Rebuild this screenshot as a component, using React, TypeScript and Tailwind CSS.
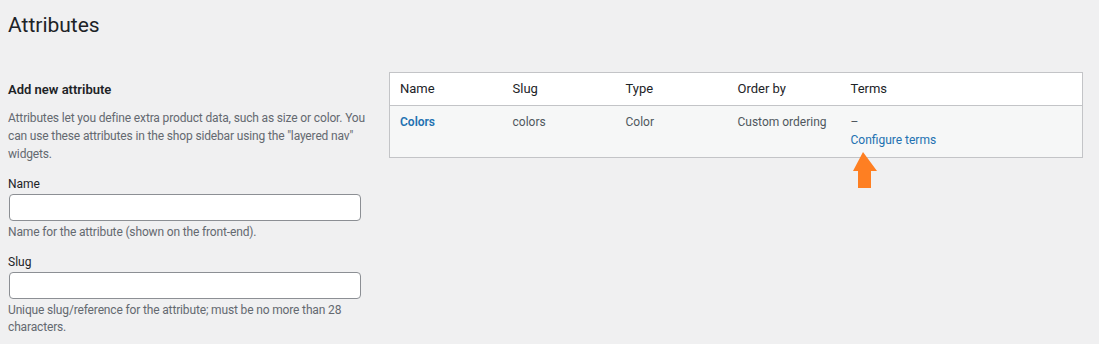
const App = () => {
  return (
    <div
      className="min-h-screen w-[1099px] h-[344px] overflow-hidden bg-[#f0f0f1] text-[#1d2327]"
      style={{ fontFamily: 'Roboto, "Liberation Sans", Arial, sans-serif' }}
    >
      <div className="pl-[8px] pt-[11px]">
        <h1 className="text-[21px] leading-[29px] font-normal text-[#1d2327]">Attributes</h1>

        <div className="flex mt-[32px]">
          {/* left column: add form */}
          <div className="w-[375px] shrink-0 pt-[8px]">
            <h2 className="text-[13px] leading-[20px] font-semibold">Add new attribute</h2>
            <p className="mt-[9px] text-[12px] leading-[18px] tracking-[-0.15px] whitespace-nowrap text-[#646970]">
              Attributes let you define extra product data, such as size or color. You
              <br />
              can use these attributes in the shop sidebar using the "layered nav"
              <br />
              widgets.
            </p>

            <div className="mt-[12px]">
              <label className="block text-[12px] leading-[18px]">Name</label>
              <input
                type="text"
                className="mt-[1px] ml-[1px] block w-[352px] h-[27px] bg-white border border-[#8c8f94] rounded-[4px]"
              />
              <p className="mt-[2px] text-[12px] leading-[18px] tracking-[-0.15px] text-[#646970]">
                Name for the attribute (shown on the front-end).
              </p>
            </div>

            <div className="mt-[12px]">
              <label className="block text-[12px] leading-[18px]">Slug</label>
              <input
                type="text"
                className="mt-[1px] ml-[1px] block w-[352px] h-[27px] bg-white border border-[#8c8f94] rounded-[4px]"
              />
              <p className="mt-[3px] text-[12px] leading-[17px] tracking-[-0.15px] whitespace-nowrap text-[#646970]">
                Unique slug/reference for the attribute; must be no more than 28
                <br />
                characters.
              </p>
            </div>
          </div>

          {/* right column: table */}
          <div className="ml-[6px]">
            <table className="w-[694px] border border-[#c3c4c7] border-collapse table-fixed">
              <thead>
                <tr className="bg-white border-b border-[#c3c4c7] text-[13px]">
                  <th className="w-[113px] h-[33px] pl-[10px] text-left font-normal">Name</th>
                  <th className="w-[113px] pl-[10px] text-left font-normal">Slug</th>
                  <th className="w-[112px] pl-[10px] text-left font-normal">Type</th>
                  <th className="w-[113px] pl-[10px] text-left font-normal">Order by</th>
                  <th className="pl-[10px] text-left font-normal">Terms</th>
                </tr>
              </thead>
              <tbody>
                <tr className="bg-[#f6f7f7] align-top text-[12px] leading-[18px] text-[#50575e]">
                  <td className="pl-[10px] pt-[7px] h-[52px]">
                    <a className="text-[#2271b1] font-semibold">Colors</a>
                  </td>
                  <td className="pl-[10px] pt-[7px]">colors</td>
                  <td className="pl-[10px] pt-[7px]">Color</td>
                  <td className="pl-[10px] pt-[7px]">Custom ordering</td>
                  <td className="pl-[10px] pt-[7px]">
                    <div>–</div>
                    <a className="text-[#2271b1]">Configure terms</a>
                  </td>
                </tr>
              </tbody>
            </table>
            <div className="ml-[464px] mt-[-6px] relative">
              <svg width="24" height="37" viewBox="0 0 24 37" className="absolute top-0 left-0">
                <polygon points="10,0 0,19 5,19 5,36 18,36 18,19 24,19" fill="#fe7f22" />
              </svg>
            </div>
          </div>
        </div>
      </div>
    </div>
  );
};

export default App;
